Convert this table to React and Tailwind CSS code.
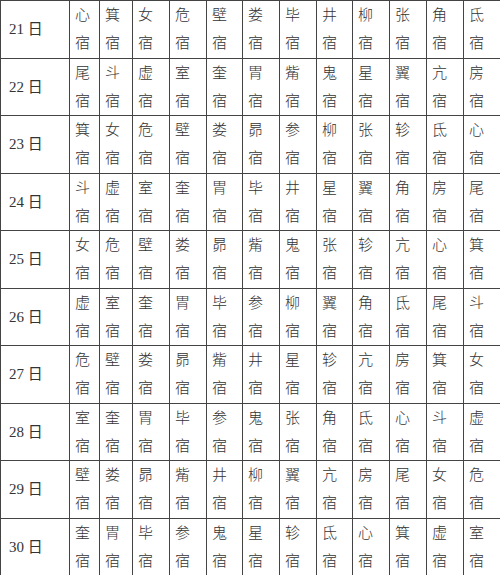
import React from 'react';

const rows = [
    { day: '21', stars: ['心', '箕', '女', '危', '壁', '娄', '毕', '井', '柳', '张', '角', '氐'] },
    { day: '22', stars: ['尾', '斗', '虚', '室', '奎', '胃', '觜', '鬼', '星', '翼', '亢', '房'] },
    { day: '23', stars: ['箕', '女', '危', '壁', '娄', '昴', '参', '柳', '张', '轸', '氐', '心'] },
    { day: '24', stars: ['斗', '虚', '室', '奎', '胃', '毕', '井', '星', '翼', '角', '房', '尾'] },
    { day: '25', stars: ['女', '危', '壁', '娄', '昴', '觜', '鬼', '张', '轸', '亢', '心', '箕'] },
    { day: '26', stars: ['虚', '室', '奎', '胃', '毕', '参', '柳', '翼', '角', '氐', '尾', '斗'] },
    { day: '27', stars: ['危', '壁', '娄', '昴', '觜', '井', '星', '轸', '亢', '房', '箕', '女'] },
    { day: '28', stars: ['室', '奎', '胃', '毕', '参', '鬼', '张', '角', '氐', '心', '斗', '虚'] },
    { day: '29', stars: ['壁', '娄', '昴', '觜', '井', '柳', '翼', '亢', '房', '尾', '女', '危'] },
    { day: '30', stars: ['奎', '胃', '毕', '参', '鬼', '星', '轸', '氐', '心', '箕', '虚', '室'] },
];

// column widths read off the reference grid
const colWidths = ['w-[69px]', 'w-[30px]', 'w-[33px]', 'w-[37px]', 'w-[37px]', 'w-[36px]', 'w-[37px]', 'w-[37px]', 'w-[36px]', 'w-[37px]', 'w-[37px]', 'w-[37px]', 'w-[37px]'];

export default function App() {
    return (
        <div className="w-[500px] h-[575px] bg-white overflow-hidden font-['Liberation_Serif','Noto_Sans_CJK_SC',serif] text-[#333]">
            <table className="table-fixed border-collapse w-[500px]">
                <colgroup>
                    {colWidths.map((w, i) => (
                        <col key={i} className={w} />
                    ))}
                </colgroup>
                <tbody>
                    {rows.map(row => (
                        <tr key={row.day} className="h-[57.5px]">
                            <td className="border border-[#444] pl-[8px] text-[15px] align-middle whitespace-nowrap">
                                {row.day} 日
                            </td>
                            {row.stars.map((s, i) => (
                                <td key={i} className="border border-[#444] pl-[5px] pt-0 align-top text-[15px] leading-[28px] font-light">
                                    <div>{s}</div>
                                    <div>宿</div>
                                </td>
                            ))}
                        </tr>
                    ))}
                </tbody>
            </table>
        </div>
    );
}
